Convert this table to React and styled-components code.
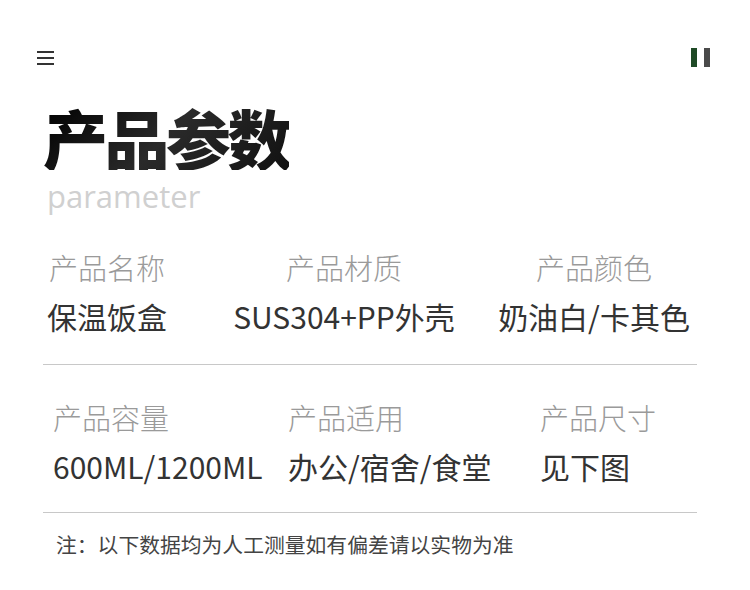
import React from 'react'
import styled, { createGlobalStyle } from 'styled-components'

const GlobalStyle = createGlobalStyle`
  body {
    margin: 0;
    background: #fff;
    font-family: "Noto Sans CJK SC", "Noto Sans", sans-serif;
  }
`

const Page = styled.div`
  width: 750px;
  height: 590px;
  background: #fff;
  overflow: hidden;
`

const Header = styled.div`
  display: flex;
  justify-content: space-between;
  align-items: center;
  padding: 48px 40px 0 37px;
  height: 19px;
`

const Burger = styled.div`
  display: flex;
  flex-direction: column;
  gap: 4px;
  width: 17px;
  span {
    height: 2px;
    background: #333;
  }
`

const Pause = styled.div`
  display: flex;
  gap: 7px;
  height: 19px;
`

const Bar = styled.div`
  width: 6px;
  height: 100%;
  background: ${p => p.$color};
`

const TitleBlock = styled.div`
  padding: 38px 0 0 43px;
`

const Title = styled.h1`
  margin: 0;
  font-size: 65px;
  line-height: 1;
  font-weight: 900;
  letter-spacing: -3.5px;
  color: #111;
  background: linear-gradient(135deg, #000 0%, #2a2a2a 50%, #111 100%);
  -webkit-background-clip: text;
  background-clip: text;
  -webkit-text-fill-color: transparent;
  display: inline-block;
`

const Sub = styled.div`
  margin-top: 11px;
  font-family: "Open Sans", sans-serif;
  font-size: 31px;
  line-height: 1;
  color: #d0d0d0;
  padding-left: 4px;
`

const Section = styled.div`
  margin: 0 53px 0 43px;
  padding-top: ${p => p.$top}px;
  padding-bottom: ${p => p.$bottom}px;
  border-bottom: 1px solid #c8c8c8;
`

const Row = styled.div`
  display: grid;
  grid-template-columns: ${p => p.$cols};
  justify-items: ${p => p.$align};
  padding-left: ${p => p.$indent || 0}px;
`

const Cell = styled.div`
  display: flex;
  flex-direction: column;
  align-items: ${p => p.$align};
  gap: 19px;
`

const Label = styled.div`
  font-size: 29px;
  line-height: 1;
  font-weight: 300;
  color: #9a9a9a;
  white-space: nowrap;
`

const Value = styled.div`
  font-size: 30px;
  line-height: 1;
  color: #333;
  white-space: nowrap;
`

const Note = styled.div`
  margin: 21px 0 0 56px;
  font-size: 20.8px;
  line-height: 1;
  color: #444;
`

const rows = [
  {
    cols: '128px 346px 154px',
    align: 'center',
    top: 41,
    bottom: 33,
    items: [
      ['产品名称', '保温饭盒'],
      ['产品材质', 'SUS304+PP外壳'],
      ['产品颜色', '奶油白/卡其色'],
    ],
  },
  {
    cols: '235px 252px 1fr',
    align: 'start',
    indent: 10,
    top: 38,
    bottom: 31,
    items: [
      ['产品容量', '600ML/1200ML'],
      ['产品适用', '办公/宿舍/食堂'],
      ['产品尺寸', '见下图'],
    ],
  },
]

export default function App() {
  return (
    <Page>
      <GlobalStyle />
      <Header>
        <Burger><span /><span /><span /></Burger>
        <Pause>
          <Bar $color="#1f4a26" />
          <Bar $color="#4a4a4a" />
        </Pause>
      </Header>
      <TitleBlock>
        <Title>产品参数</Title>
        <Sub>parameter</Sub>
      </TitleBlock>
      {rows.map((r, i) => (
        <Section key={i} $top={r.top} $bottom={r.bottom}>
          <Row $cols={r.cols} $align={r.align} $indent={r.indent}>
            {r.items.map(([label, value]) => (
              <Cell key={label} $align={r.align === 'center' ? 'center' : 'flex-start'}>
                <Label>{label}</Label>
                <Value>{value}</Value>
              </Cell>
            ))}
          </Row>
        </Section>
      ))}
      <Note>注：以下数据均为人工测量如有偏差请以实物为准</Note>
    </Page>
  )
}
